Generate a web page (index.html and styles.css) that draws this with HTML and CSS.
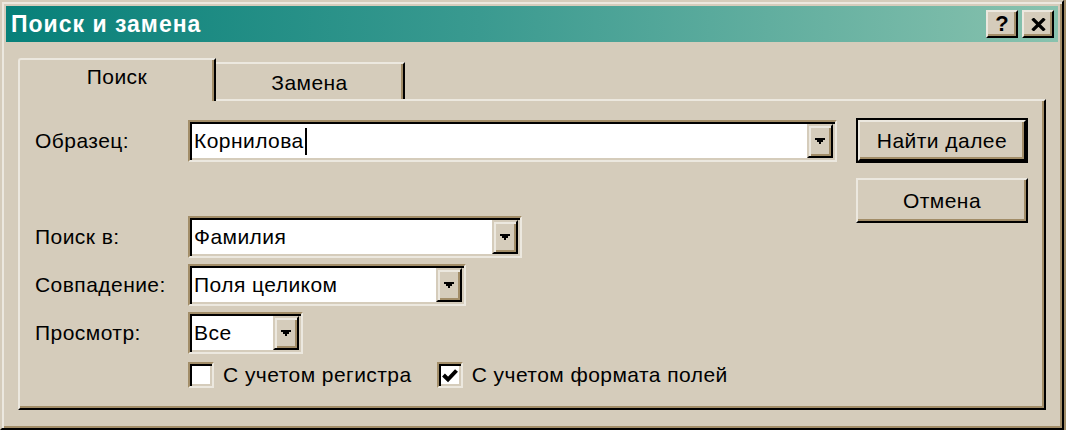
FILE: index.html
```html
<!DOCTYPE html>
<html lang="ru">
<head>
<meta charset="utf-8">
<title>Поиск и замена</title>
<link rel="stylesheet" href="styles.css">
</head>
<body>
<div class="window">
  <div class="titlebar">
    <span class="title">Поиск и замена</span>
    <div class="caption-btns">
      <div class="cap-btn cap-help">?</div>
      <div class="cap-btn">
        <svg width="15" height="13" viewBox="0 0 15 13"><path d="M1.5 0.5 L13.5 12.5 M13.5 0.5 L1.5 12.5" stroke="#000" stroke-width="3.2" fill="none"/></svg>
      </div>
    </div>
  </div>

  <div class="tabs">
    <div class="tab tab-active">Поиск</div>
    <div class="tab">Замена</div>
  </div>

  <div class="panel">
    <div class="form">
      <div class="row row-first">
        <span class="label">Образец:</span>
        <div class="combo combo-1">
          <span class="value">Корнилова<span class="caret"></span></span>
          <span class="drop"><svg width="10" height="6" viewBox="0 0 10 6"><path d="M0 0h10v2h-2v2h-2v2h-2v-2h-2v-2h-2z" fill="#000"/></svg></span>
        </div>
      </div>
      <div class="row row-second">
        <span class="label">Поиск в:</span>
        <div class="combo combo-2">
          <span class="value">Фамилия</span>
          <span class="drop"><svg width="10" height="6" viewBox="0 0 10 6"><path d="M0 0h10v2h-2v2h-2v2h-2v-2h-2v-2h-2z" fill="#000"/></svg></span>
        </div>
      </div>
      <div class="row">
        <span class="label">Совпадение:</span>
        <div class="combo combo-3">
          <span class="value">Поля целиком</span>
          <span class="drop"><svg width="10" height="6" viewBox="0 0 10 6"><path d="M0 0h10v2h-2v2h-2v2h-2v-2h-2v-2h-2z" fill="#000"/></svg></span>
        </div>
      </div>
      <div class="row">
        <span class="label">Просмотр:</span>
        <div class="combo combo-4">
          <span class="value">Все</span>
          <span class="drop"><svg width="10" height="6" viewBox="0 0 10 6"><path d="M0 0h10v2h-2v2h-2v2h-2v-2h-2v-2h-2z" fill="#000"/></svg></span>
        </div>
      </div>
      <div class="checks">
        <div class="check">
          <span class="box"></span>
          <span class="check-label">С учетом регистра</span>
        </div>
        <div class="check">
          <span class="box"><svg width="16" height="15" viewBox="0 0 16 15"><path d="M1.5 7 L6 11.5 L14.5 2.5" stroke="#000" stroke-width="4" fill="none"/></svg></span>
          <span class="check-label">С учетом формата полей</span>
        </div>
      </div>
    </div>
    <div class="actions">
      <div class="btn btn-default"><span class="btn-inner">Найти далее</span></div>
      <div class="btn"><span class="btn-inner">Отмена</span></div>
    </div>
  </div>
</div>
</body>
</html>
```

FILE: styles.css
```css
html, body {
  margin: 0;
  padding: 0;
}
body {
  width: 1066px;
  height: 430px;
  background: #a28d68;
  font-family: "Liberation Sans", Arial, sans-serif;
  font-size: 21px;
  letter-spacing: 0.45px;
  color: #000;
  overflow: hidden;
}
.window {
  box-sizing: border-box;
  width: 1064px;
  height: 430px;
  background: #d5ccbb;
  border: 2px solid;
  border-color: #d5ccbb #000 #000 #d5ccbb;
  box-shadow: inset 2px 2px 0 #ece8df, inset -2px -2px 0 #a28d68;
  padding: 4px;
  display: flex;
  flex-direction: column;
}
.titlebar {
  height: 36px;
  flex: none;
  background: linear-gradient(to right, #078079 0%, #3a9a90 45%, #88c2ae 100%);
  display: flex;
  align-items: center;
  justify-content: space-between;
  padding: 0 4px 0 5px;
}
.title {
  color: #fff;
  font-weight: bold;
  font-size: 23px;
  letter-spacing: 1px;
}
.caption-btns {
  display: flex;
  gap: 4px;
}
.cap-btn {
  box-sizing: border-box;
  width: 32px;
  height: 28px;
  background: #d5ccbb;
  border: 2px solid;
  border-color: #ece8df #000 #000 #ece8df;
  box-shadow: inset -2px -2px 0 #a28d68;
  display: flex;
  align-items: center;
  justify-content: center;
}
.cap-help {
  font-weight: bold;
  font-size: 22px;
  letter-spacing: 0;
  line-height: 1;
  padding-bottom: 1px;
}
.tabs {
  display: flex;
  align-items: flex-end;
  margin: 16px 12px 0;
  height: 41px;
  flex: none;
}
.tab {
  box-sizing: border-box;
  width: 189px;
  height: 37px;
  background: #d5ccbb;
  border-top: 2px solid #ece8df;
  border-right: 2px solid #000;
  box-shadow: inset -2px 0 0 #a28d68;
  text-align: center;
  padding-top: 8px;
  line-height: 22px;
}
.tab-active {
  width: 198px;
  height: 43px;
  margin-bottom: -2px;
  position: relative;
  z-index: 1;
  border-left: 2px solid #ece8df;
  padding-top: 6px;
  border-top-left-radius: 3px;
}
.panel {
  box-sizing: border-box;
  height: 311px;
  margin: 0 12px;
  flex: none;
  border: 2px solid;
  border-color: #ece8df #000 #000 #ece8df;
  box-shadow: inset -2px -2px 0 #a28d68;
  padding: 17px 16px 0 15px;
  display: flex;
  justify-content: space-between;
}
.form {
  display: flex;
  flex-direction: column;
}
.row {
  display: flex;
  align-items: center;
  height: 42px;
  margin-top: 6px;
}
.row-first {
  margin-top: 2px;
}
.row-second {
  margin-top: 54px;
}
.label {
  width: 153px;
  flex: none;
}
.combo {
  box-sizing: border-box;
  height: 42px;
  background: #fff;
  border: 2px solid;
  border-color: #a28d68 #ece8df #ece8df #a28d68;
  box-shadow: inset 2px 2px 0 #000, inset -2px -2px 0 #d5ccbb;
  padding: 2px 2px 2px 4px;
  display: flex;
  align-items: center;
  justify-content: space-between;
}
.combo-1 { width: 649px; }
.combo-2 { width: 334px; }
.combo-3 { width: 278px; }
.combo-4 { width: 115px; }
.value {
  display: flex;
  align-items: center;
  white-space: nowrap;
}
.caret {
  display: inline-block;
  width: 2px;
  height: 27px;
  background: #000;
  margin-left: 1px;
}
.drop {
  box-sizing: border-box;
  width: 26px;
  height: 34px;
  background: #d5ccbb;
  border: 2px solid;
  border-color: #d5ccbb #000 #000 #d5ccbb;
  box-shadow: inset 2px 2px 0 #ece8df, inset -2px -2px 0 #a28d68;
  display: flex;
  align-items: center;
  justify-content: center;
  flex: none;
}
.checks {
  display: flex;
  align-items: center;
  margin-top: 8px;
  margin-left: 153px;
  height: 26px;
}
.check {
  display: flex;
  align-items: center;
  gap: 9px;
  margin-right: 25px;
}
.box {
  box-sizing: border-box;
  width: 26px;
  height: 26px;
  background: #fff;
  border: 2px solid;
  border-color: #a28d68 #ece8df #ece8df #a28d68;
  box-shadow: inset 2px 2px 0 #000, inset -2px -2px 0 #d5ccbb;
  display: flex;
  align-items: center;
  justify-content: center;
  padding: 1px 0 0 1px;
}
.actions {
  display: flex;
  flex-direction: column;
  gap: 15px;
  width: 172px;
}
.btn {
  box-sizing: border-box;
  width: 172px;
  height: 45px;
  background: #d5ccbb;
  border: 2px solid;
  border-color: #ece8df #000 #000 #ece8df;
  box-shadow: inset -2px -2px 0 #a28d68;
  display: flex;
  align-items: center;
  justify-content: center;
}
.btn-default {
  border: 2px solid #000;
  box-shadow: none;
  padding: 0;
}
.btn-default .btn-inner {
  box-sizing: border-box;
  width: 100%;
  height: 100%;
  border: 2px solid;
  border-color: #ece8df #000 #000 #ece8df;
  box-shadow: inset -2px -2px 0 #a28d68;
  display: flex;
  align-items: center;
  justify-content: center;
}
```
